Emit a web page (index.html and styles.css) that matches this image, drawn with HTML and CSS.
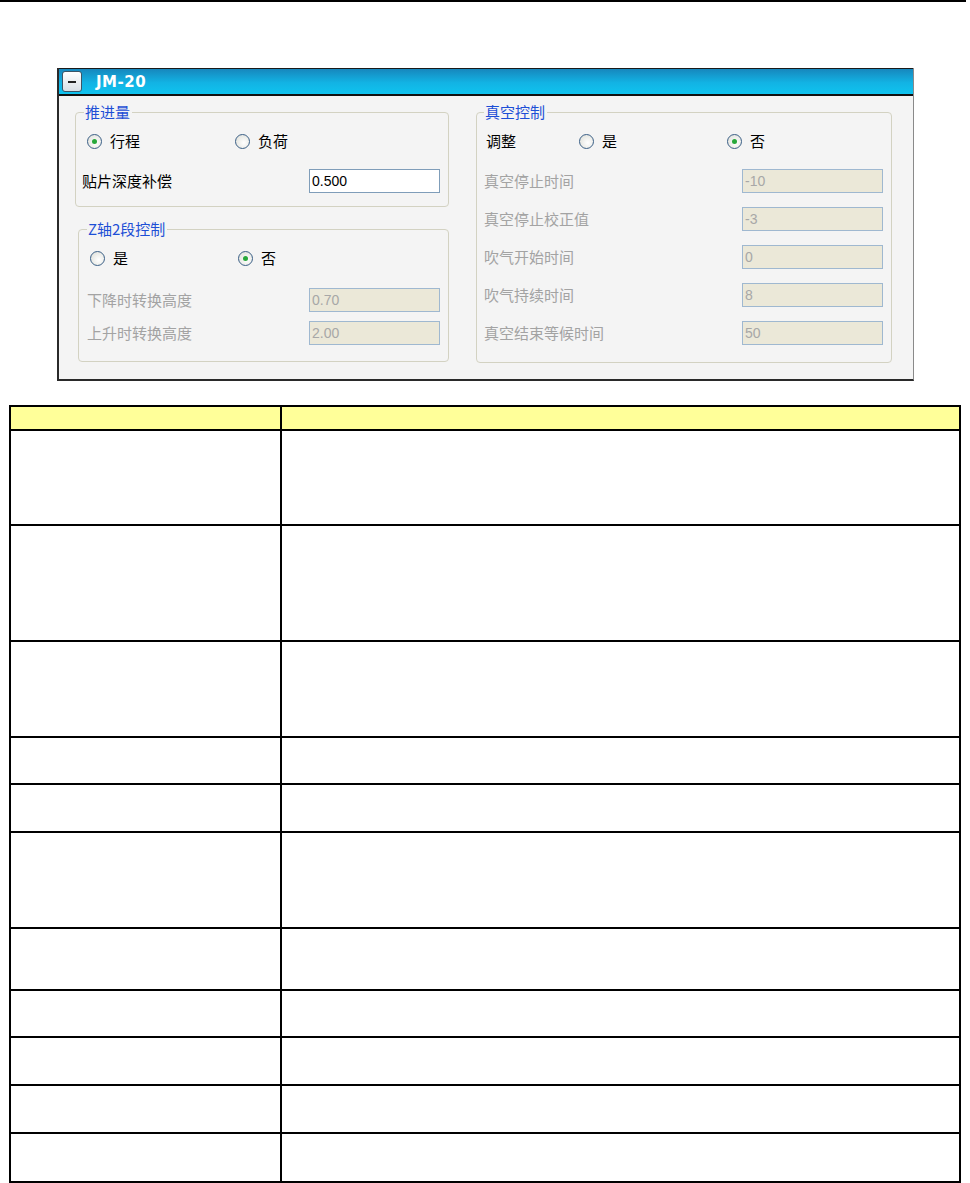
FILE: index.html
```html
<!DOCTYPE html>
<html lang="zh-CN">
<head>
  <meta charset="UTF-8" />
  <title>JM-20</title>
  <link rel="stylesheet" href="styles.css">
</head>
<body>
  <div class="TopLine"></div>

  <div class="Panel">
    <div class="TitleBar">
      <span class="Collapse"><span class="Dash"></span></span>
      <span class="Title">JM-20</span>
    </div>

    <div class="PanelBody">
      <div class="Column left">
        <fieldset class="Group feed">
          <legend>推进量</legend>
          <div class="RadioRow">
            <label class="Radio checked"><span class="dot"></span>行程</label>
            <label class="Radio"><span class="dot"></span>负荷</label>
          </div>
          <div class="Field">
            <span class="Label">贴片深度补偿</span>
            <input class="Input" type="text" value="0.500">
          </div>
        </fieldset>

        <fieldset class="Group zaxis">
          <legend>Z轴2段控制</legend>
          <div class="RadioRow">
            <label class="Radio"><span class="dot"></span>是</label>
            <label class="Radio checked"><span class="dot"></span>否</label>
          </div>
          <div class="Field first">
            <span class="Label off">下降时转换高度</span>
            <input class="Input" type="text" value="0.70" disabled>
          </div>
          <div class="Field">
            <span class="Label off">上升时转换高度</span>
            <input class="Input" type="text" value="2.00" disabled>
          </div>
        </fieldset>
      </div>

      <div class="Column right">
        <fieldset class="Group vacuum">
          <legend>真空控制</legend>
          <div class="RadioRow">
            <span class="Label adjust">调整</span>
            <label class="Radio"><span class="dot"></span>是</label>
            <label class="Radio checked"><span class="dot"></span>否</label>
          </div>
          <div class="Field">
            <span class="Label off">真空停止时间</span>
            <input class="Input wide" type="text" value="-10" disabled>
          </div>
          <div class="Field">
            <span class="Label off">真空停止校正值</span>
            <input class="Input wide" type="text" value="-3" disabled>
          </div>
          <div class="Field">
            <span class="Label off">吹气开始时间</span>
            <input class="Input wide" type="text" value="0" disabled>
          </div>
          <div class="Field">
            <span class="Label off">吹气持续时间</span>
            <input class="Input wide" type="text" value="8" disabled>
          </div>
          <div class="Field">
            <span class="Label off">真空结束等候时间</span>
            <input class="Input wide" type="text" value="50" disabled>
          </div>
        </fieldset>
      </div>
    </div>
  </div>

  <table class="Params">
    <tr class="head"><th></th><th></th></tr>
    <tr class="r95"><td></td><td></td></tr>
    <tr class="r116"><td></td><td></td></tr>
    <tr class="r96"><td></td><td></td></tr>
    <tr class="r47"><td></td><td></td></tr>
    <tr class="r48"><td></td><td></td></tr>
    <tr class="r96"><td></td><td></td></tr>
    <tr class="r62"><td></td><td></td></tr>
    <tr class="r47"><td></td><td></td></tr>
    <tr class="r48"><td></td><td></td></tr>
    <tr class="r48"><td></td><td></td></tr>
    <tr class="r49"><td></td><td></td></tr>
  </table>
</body>
</html>
```

FILE: styles.css
```css
* {
  margin: 0;
  padding: 0;
  box-sizing: border-box;
}

body {
  background: #fff;
  font-family: "Noto Sans CJK SC", "Liberation Sans", sans-serif;
  font-size: 15px;
  color: #000;
}

.TopLine {
  width: 966px;
  height: 2px;
  background: #000;
}

/* JM-20 panel */
.Panel {
  width: 857px;
  margin: 66px 0 0 57px;
  background: #f4f4f4;
  border-left: 2px solid #2a2a2a;
  border-right: 1px solid #8a8a8a;
  border-bottom: 2px solid #2a2a2a;
}

.TitleBar {
  height: 28px;
  display: flex;
  align-items: center;
  padding-left: 3px;
  border-top: 1px solid #1a1a1a;
  border-bottom: 2px solid #111;
  background: linear-gradient(#1787bd, #12b3e4 55%, #0fc3ef);
}

.Collapse {
  width: 20px;
  height: 21px;
  display: flex;
  align-items: center;
  justify-content: center;
  border: 1px solid #3d5566;
  border-radius: 3px;
  background: linear-gradient(#ffffff, #d9e0e6);
}

.Dash {
  width: 8px;
  height: 2px;
  background: #222;
}

.Title {
  margin-left: 14px;
  color: #fff;
  font-family: "DejaVu Sans", sans-serif;
  font-weight: bold;
  font-size: 15px;
  letter-spacing: 0.5px;
}

.PanelBody {
  display: flex;
  gap: 27px;
  padding: 7px 20px 16px 16px;
}

.Column {
  display: flex;
  flex-direction: column;
  gap: 13px;
}

.Column.left {
  width: 374px;
}

.Column.right {
  width: 416px;
}

.Group {
  border: 1px solid #d3d2c2;
  border-radius: 4px;
  padding: 0 8px 13px 8px;
}

.Group legend {
  padding: 0 2px 0 1px;
  color: #1d4fd6;
  line-height: 18px;
}

.Group.zaxis {
  margin-left: 3px;
  padding-bottom: 16px;
}

.Group.vacuum {
  height: 260px;
  padding-left: 7px;
}

.RadioRow {
  height: 20px;
  margin-top: 10px;
  display: flex;
  align-items: center;
  padding-left: 3px;
}

.Radio {
  width: 148px;
  display: flex;
  align-items: center;
  gap: 8px;
  line-height: 20px;
}

.dot {
  width: 15px;
  height: 15px;
  border-radius: 50%;
  border: 1px solid #3a5f86;
  background: radial-gradient(circle at 60% 60%, #fff, #dcddd6);
  display: flex;
  align-items: center;
  justify-content: center;
}

.Radio.checked .dot::after {
  content: "";
  width: 5px;
  height: 5px;
  border-radius: 50%;
  background: #27a83a;
}

.Label.adjust {
  width: 93px;
  margin-left: -1px;
}

.Field {
  height: 24px;
  margin-top: 18px;
  display: flex;
  align-items: center;
  justify-content: space-between;
}

.feed .Field .Label {
  margin-left: -2px;
}

.zaxis .Field {
  margin-top: 9px;
}

.zaxis .Field.first {
  margin-top: 20px;
}

.vacuum .Field {
  margin-top: 14px;
}

.vacuum .Field:nth-of-type(2) {
  margin-top: 18px;
}

.Label {
  line-height: 20px;
}

.Label.off {
  color: #a3a3a3;
}

.Input {
  width: 131px;
  height: 24px;
  padding: 0 2px;
  border: 1px solid #7f9db9;
  background: #fff;
  font-family: "Liberation Sans", sans-serif;
  font-size: 14px;
  color: #000;
  outline: none;
}

.Input:disabled {
  background: #ebe8d8;
  border-color: #9fb8d0;
  color: #a7a7a7;
}

.Input.wide {
  width: 141px;
}

/* parameter table */
.Params {
  width: 952px;
  margin: 24px 0 0 9px;
  border-collapse: collapse;
}

.Params th,
.Params td {
  border: 2px solid #000;
  padding: 0;
}

.Params th:first-child,
.Params td:first-child {
  width: 271px;
}

.Params .head th {
  height: 24px;
  background: #ffff99;
}

.r116 td { height: 116px; }
.r96 td { height: 96px; }
.r95 td { height: 95px; }
.r62 td { height: 62px; }
.r49 td { height: 49px; }
.r48 td { height: 48px; }
.r47 td { height: 47px; }
```
